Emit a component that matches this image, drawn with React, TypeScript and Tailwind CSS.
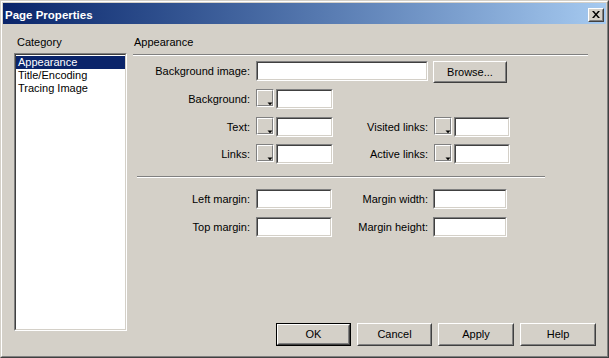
import React from "react";

const font = { fontFamily: '"Liberation Sans", Arial, sans-serif' };

function Sunken({ className = "" }: { className?: string }) {
  return (
    <div className={`border border-t-[#808080] border-l-[#808080] border-r-white border-b-white ${className}`}>
      <div className="h-full w-full border border-t-[#404040] border-l-[#404040] border-r-[#D4D0C8] border-b-[#D4D0C8] bg-white" />
    </div>
  );
}

function Btn({ label, def = false, className = "" }: { label: string; def?: boolean; className?: string }) {
  const inner = (
    <div className="h-full w-full border border-t-white border-l-white border-r-[#404040] border-b-[#404040]">
      <div className="h-full w-full border border-t-[#D4D0C8] border-l-[#D4D0C8] border-r-[#808080] border-b-[#808080] flex items-center justify-center text-[11px] text-black">
        {label}
      </div>
    </div>
  );
  if (def) {
    return <div className={`border border-black ${className}`}>{inner}</div>;
  }
  return <div className={className}>{inner}</div>;
}

function Swatch() {
  return (
    <div className="relative w-[18px] h-[18px] border border-t-[#808080] border-l-[#808080] border-r-white border-b-white">
      <div className="h-full w-full border border-t-white border-l-white border-r-[#808080] border-b-[#808080] bg-[#D4D0C8]" />
      <svg className="absolute left-[10px] top-[12px]" width="6" height="5" viewBox="0 0 6 5">
        <rect x="0" y="4" width="6" height="1" fill="#ffffff" />
        <polygon points="0.5,0.5 5.5,0.5 3,3.2" fill="#000" />
      </svg>
    </div>
  );
}

function Label({ text, w }: { text: string; w: string }) {
  return (
    <div className={`${w} h-[20px] flex items-center justify-end text-[11px] text-black whitespace-nowrap`}>{text}</div>
  );
}

export default function App() {
  return (
    <div style={font} className="w-[609px] h-[358px] bg-[#D4D0C8] border border-t-[#D4D0C8] border-l-[#D4D0C8] border-r-[#404040] border-b-[#404040]">
      <div className="h-full w-full border border-t-white border-l-white border-r-[#808080] border-b-[#808080] p-[1px] flex flex-col">
        {/* Title bar */}
        <div className="h-[21px] bg-linear-to-r from-[#0A246A] to-[#A6CAF0] flex items-center justify-between pl-[2px] pr-[2px] pt-[2px]">
          <span className="text-white font-bold text-[11.5px] leading-[14px]">Page Properties</span>
          <div className="w-[16px] h-[14px] border border-t-white border-l-white border-r-[#404040] border-b-[#404040]">
            <div className="h-full w-full border border-t-[#D4D0C8] border-l-[#D4D0C8] border-r-[#808080] border-b-[#808080] bg-[#D4D0C8] flex items-center justify-center">
              <svg width="8" height="7" viewBox="0 0 8 7">
                <path d="M0 0h2l2 2.5L6 0h2L5 3.5 8 7H6L4 4.5 2 7H0l3-3.5z" fill="#000" />
              </svg>
            </div>
          </div>
        </div>

        {/* Body */}
        <div className="flex-1 flex pl-[11px] pt-[12px] pb-[9px]">
          {/* Left column */}
          <div className="w-[113px] flex flex-col pb-[15px]">
            <div className="pl-[3px] text-[11px] leading-[13px] text-black">Category</div>
            <div className="mt-[4px] flex-1 border border-t-[#808080] border-l-[#808080] border-r-white border-b-white">
              <div className="h-full w-full border border-t-[#404040] border-l-[#404040] border-r-[#D4D0C8] border-b-[#D4D0C8] bg-white pt-[1px] text-[11px] leading-[13px]">
                <div className="bg-[#0A246A] text-white pl-[2px]">Appearance</div>
                <div className="text-black pl-[2px]">Title/Encoding</div>
                <div className="text-black pl-[2px]">Tracing Image</div>
              </div>
            </div>
          </div>

          {/* Right column */}
          <div className="ml-[6px] w-[463px] flex flex-col">
            <div className="pl-[1px] text-[11px] leading-[13px] text-black">Appearance</div>
            <div className="mt-[5px] w-[455px] h-[2px] border-t border-t-[#808080] border-b border-b-white" />

            {/* Row 1 */}
            <div className="mt-[5px] flex items-start">
              <Label text="Background image:" w="w-[117px]" />
              <Sunken className="ml-[6px] w-[172px] h-[20px]" />
              <Btn label="Browse..." className="ml-[5px] w-[74px] h-[22px]" />
            </div>

            {/* Row 2 */}
            <div className="mt-[6px] flex items-start">
              <Label text="Background:" w="w-[117px]" />
              <div className="ml-[6px]"><Swatch /></div>
              <Sunken className="ml-[2px] w-[57px] h-[20px]" />
            </div>

            {/* Row 3 */}
            <div className="mt-[8px] flex items-start">
              <Label text="Text:" w="w-[117px]" />
              <div className="ml-[6px]"><Swatch /></div>
              <Sunken className="ml-[2px] w-[57px] h-[20px]" />
              <Label text="Visited links:" w="w-[95px]" />
              <div className="ml-[6px]"><Swatch /></div>
              <Sunken className="ml-[2px] w-[56px] h-[20px]" />
            </div>

            {/* Row 4 */}
            <div className="mt-[7px] flex items-start">
              <Label text="Links:" w="w-[117px]" />
              <div className="ml-[6px]"><Swatch /></div>
              <Sunken className="ml-[2px] w-[57px] h-[20px]" />
              <Label text="Active links:" w="w-[95px]" />
              <div className="ml-[6px]"><Swatch /></div>
              <Sunken className="ml-[2px] w-[56px] h-[20px]" />
            </div>

            <div className="mt-[12px] ml-[4px] w-[408px] h-[2px] border-t border-t-[#808080] border-b border-b-white" />

            {/* Row 5 */}
            <div className="mt-[11px] flex items-start">
              <Label text="Left margin:" w="w-[117px]" />
              <Sunken className="ml-[6px] w-[76px] h-[20px]" />
              <Label text="Margin width:" w="w-[96px]" />
              <Sunken className="ml-[5px] w-[74px] h-[20px]" />
            </div>

            {/* Row 6 */}
            <div className="mt-[8px] flex items-start">
              <Label text="Top margin:" w="w-[117px]" />
              <Sunken className="ml-[6px] w-[76px] h-[20px]" />
              <Label text="Margin height:" w="w-[96px]" />
              <Sunken className="ml-[5px] w-[74px] h-[20px]" />
            </div>

            {/* Buttons */}
            <div className="mt-auto pl-[143px] flex gap-[6px]">
              <Btn label="OK" def className="w-[75px] h-[23px]" />
              <Btn label="Cancel" className="w-[75px] h-[23px]" />
              <Btn label="Apply" className="w-[76px] h-[23px]" />
              <Btn label="Help" className="w-[76px] h-[23px]" />
            </div>
          </div>
        </div>
      </div>
    </div>
  );
}
